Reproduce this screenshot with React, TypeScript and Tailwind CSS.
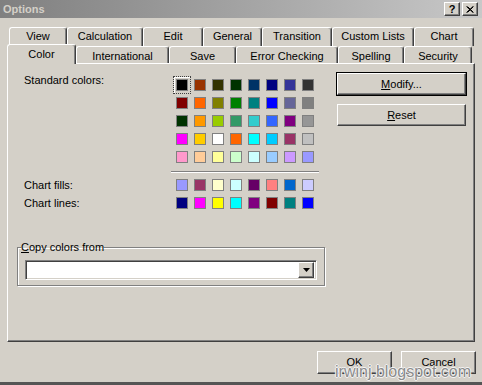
const FONT = "font-['Liberation_Sans',Arial,sans-serif]";

const standardColors = [
  ["#000000", "#993300", "#333300", "#003300", "#003366", "#000080", "#333399", "#333333"],
  ["#800000", "#FF6600", "#808000", "#008000", "#008080", "#0000FF", "#666699", "#808080"],
  ["#003300", "#FF9900", "#99CC00", "#339966", "#33CCCC", "#3366FF", "#800080", "#969696"],
  ["#FF00FF", "#FFCC00", "#FFFFFF", "#FF6600", "#00FFFF", "#00CCFF", "#993366", "#C0C0C0"],
  ["#FF99CC", "#FFCC99", "#FFFF99", "#CCFFCC", "#CCFFFF", "#99CCFF", "#CC99FF", "#9999FF"],
];

const chartFills = ["#9999FF", "#993366", "#FFFFCC", "#CCFFFF", "#660066", "#FF8080", "#0066CC", "#CCCCFF"];
const chartLines = ["#000080", "#FF00FF", "#FFFF00", "#00FFFF", "#800080", "#800000", "#008080", "#0000FF"];

const topTabs = [
  { label: "View", w: "w-[58px]" },
  { label: "Calculation", w: "w-[76px]" },
  { label: "Edit", w: "w-[60px]" },
  { label: "General", w: "w-[59px]" },
  { label: "Transition", w: "w-[70px]" },
  { label: "Custom Lists", w: "w-[82px]" },
  { label: "Chart", w: "w-[60px]" },
];

const bottomTabs = [
  { label: "International", w: "w-[93px]" },
  { label: "Save", w: "w-[67px]" },
  { label: "Error Checking", w: "w-[102px]" },
  { label: "Spelling", w: "w-[66px]" },
  { label: "Security", w: "w-[68px]" },
];

const raised =
  "border-t border-l border-t-white border-l-white border-r border-b border-r-[#404040] border-b-[#404040] shadow-[inset_-1px_-1px_0_#808080]";

function Swatch({ color, selected }: { color: string; selected?: boolean }) {
  return (
    <div
      className={`w-[18px] h-[18px] flex items-center justify-center ${
        selected ? "border border-dotted border-[#404040] shadow-[inset_1px_1px_0_white]" : ""
      }`}
    >
      <div className="w-[12px] h-[12px] border border-[#808080]" style={{ backgroundColor: color }} />
    </div>
  );
}

function Tab({ label, w, active, pad }: { label: string; w: string; active?: boolean; pad: string }) {
  return (
    <div
      className={`${w} ${pad} ${
        active ? "h-[20px] -mb-px relative z-10" : "h-full"
      } shrink-0 bg-[#d4d0c8] rounded-t-[3px] border-t border-l border-white border-r border-r-[#404040] shadow-[inset_-1px_0_0_#808080] flex justify-center text-[11px] leading-[13px] text-black`}
    >
      {label}
    </div>
  );
}

function Button({ children, isDefault, className = "" }: { children: React.ReactNode; isDefault?: boolean; className?: string }) {
  const inner = (
    <div className={`w-full h-full ${raised} flex items-center justify-center text-[11px] text-black`}>{children}</div>
  );
  if (isDefault) {
    return <div className={`border border-black ${className}`}>{inner}</div>;
  }
  return <div className={className}>{inner}</div>;
}

export default function App() {
  return (
    <div className={`${FONT} relative w-[482px] h-[385px] bg-[#d4d0c8] overflow-hidden flex flex-col border-b-[3px] border-b-[#555555]`}>
      {/* title bar */}
      <div className="h-[18px] shrink-0 flex items-center pl-[3px] pr-[4px] bg-gradient-to-r from-[#808080] to-[#c8c8c8]">
        <span className="text-[11px] font-bold text-[#d4d0c8]">Options</span>
        <div className="ml-auto flex gap-[2px]">
          <div className={`w-[16px] h-[14px] bg-[#d4d0c8] ${raised} flex items-center justify-center text-[11px] font-bold leading-none text-black`}>
            ?
          </div>
          <div className={`w-[16px] h-[14px] bg-[#d4d0c8] ${raised} flex items-center justify-center`}>
            <svg width="8" height="7" viewBox="0 0 8 7">
              <path d="M0.5 0.5 L7 6.5 M1.5 0.5 L7.5 6.5 M7 0.5 L0.5 6.5 M7.5 0.5 L1.5 6.5" stroke="black" strokeWidth="1" />
            </svg>
          </div>
        </div>
      </div>

      {/* tabs */}
      <div className="mt-[9px] h-[19px] pl-[9px] flex">
        {topTabs.map((t) => (
          <Tab key={t.label} {...t} pad="pt-[2px]" />
        ))}
      </div>
      <div className="h-[17px] pl-[7px] flex items-end">
        <Tab label="Color" w="w-[69px]" active pad="pt-[3px]" />
        {bottomTabs.map((t) => (
          <Tab key={t.label} {...t} pad="pt-[3px]" />
        ))}
      </div>

      {/* panel */}
      <div className="ml-[7px] w-[468px] h-[279px] border-t border-l border-white border-r border-b border-r-[#404040] border-b-[#404040] shadow-[inset_-1px_-1px_0_#808080] flex text-[11px] leading-[13px] text-black">
        <div className="w-[328px] pt-[12px] pl-[9px] flex flex-col">
          <div className="flex pl-[7px]">
            <div className="w-[149px] -mt-[2px]">Standard colors:</div>
            <div className="grid grid-cols-8">
              {standardColors.flat().map((c, i) => (
                <Swatch key={i} color={c} selected={i === 0} />
              ))}
            </div>
          </div>
          <div className="ml-[154px] mt-[5px] w-[148px] border-t border-t-[#808080] border-b border-b-white" />
          <div className="flex items-center pl-[7px] mt-[3px]">
            <div className="w-[149px]">Chart fills:</div>
            <div className="flex">
              {chartFills.map((c, i) => (
                <Swatch key={i} color={c} />
              ))}
            </div>
          </div>
          <div className="flex items-center pl-[7px]">
            <div className="w-[149px]">Chart lines:</div>
            <div className="flex">
              {chartLines.map((c, i) => (
                <Swatch key={i} color={c} />
              ))}
            </div>
          </div>

          <fieldset className="mt-[29px] w-[308px] border border-[#808080] shadow-[inset_1px_1px_0_white,1px_1px_0_white] pl-[3px] pb-[5px]">
            <legend className="px-0">
              <span className="underline">C</span>opy colors from
            </legend>
            <div className="ml-[4px] mt-[6px] w-[292px] h-[20px] bg-white border-t border-l border-[#808080] border-r border-b border-r-white border-b-white shadow-[inset_1px_1px_0_#404040,inset_-1px_-1px_0_#d4d0c8] flex justify-end items-center pr-[2px]">
              <div className={`w-[16px] h-[16px] bg-[#d4d0c8] ${raised} flex items-center justify-center`}>
                <svg width="7" height="4" viewBox="0 0 7 4">
                  <path d="M0 0 H7 L3.5 4 Z" fill="black" />
                </svg>
              </div>
            </div>
          </fieldset>
        </div>

        <div className="pt-[8px] flex flex-col">
          <Button isDefault className="w-[131px] h-[24px]">
            <span>
              <span className="underline">M</span>odify...
            </span>
          </Button>
          <Button className="mt-[8px] ml-[1px] w-[129px] h-[22px]">
            <span>
              <span className="underline">R</span>eset
            </span>
          </Button>
        </div>
      </div>

      {/* dialog buttons */}
      <div className="mt-[9px] flex justify-end gap-[9px] pr-[6px]">
        <Button className="w-[75px] h-[23px]">OK</Button>
        <Button className="w-[75px] h-[23px]">Cancel</Button>
      </div>

      {/* watermark over the buttons */}
      <div className="absolute left-[335px] top-[364px] text-[16px] leading-[16px] text-[#8c8c8c] [text-shadow:1px_0_0_#f4f4f4,-1px_0_0_#f4f4f4,0_1px_0_#f4f4f4,0_-1px_0_#f4f4f4] pointer-events-none">
        irwinj.blogspot.com
      </div>
    </div>
  );
}
